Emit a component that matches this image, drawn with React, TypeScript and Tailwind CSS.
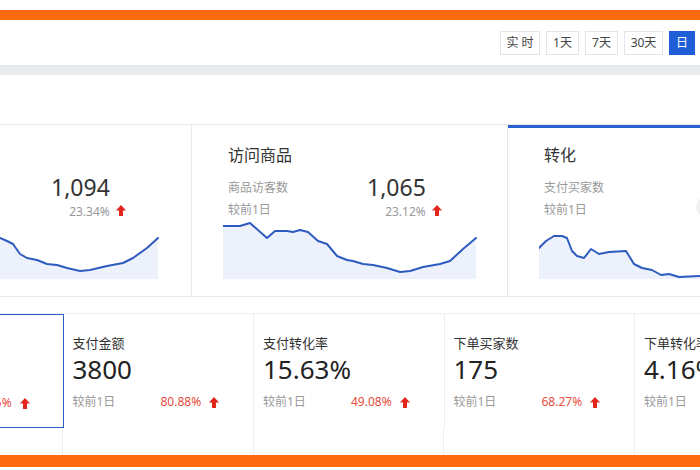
import React from 'react'

type Pt = [number, number]

const font = { fontFamily: '"Noto Sans", "Noto Sans CJK SC", sans-serif' }

function UpArrow() {
  return (
    <svg width="10" height="11" viewBox="0 0 10 11" className="shrink-0">
      <path d="M5 0 L10 5.5 L7 5.5 L7 11 L3 11 L3 5.5 L0 5.5 Z" fill="#e3261c" />
    </svg>
  )
}

function Spark({ points, width, bottom }: { points: Pt[]; width: number; bottom: number }) {
  const line = points.map((p, i) => `${i ? 'L' : 'M'}${p[0]} ${p[1]}`).join(' ')
  const last = points[points.length - 1]
  const area = `${line} L${last[0]} ${bottom} L${points[0][0]} ${bottom} Z`
  return (
    <svg width={width} height={62} viewBox={`0 0 ${width} 62`} className="block">
      <path d={area} fill="#edf1fb" />
      <path d={line} fill="none" stroke="#2d5bbf" strokeWidth="2" strokeLinejoin="round" strokeLinecap="round" />
    </svg>
  )
}

const chart1: Pt[] = [
  [0, 10], [30, 12], [60, 16], [93, 19], [100, 22], [106, 25], [113, 35], [120, 39], [130, 41],
  [140, 45], [150, 46], [160, 49], [173, 52], [183, 51], [200, 47], [216, 44], [226, 39],
  [240, 29], [251, 19],
]
const chart2: Pt[] = [
  [0, 7], [17, 7], [27, 4], [44, 19], [52, 12], [64, 12], [70, 13], [77, 11], [85, 13],
  [95, 22], [104, 25], [114, 37], [124, 41], [130, 42], [140, 45], [150, 46], [164, 49],
  [177, 53], [187, 52], [200, 48], [217, 45], [227, 42], [240, 30], [253, 19],
]
const chart3: Pt[] = [
  [0, 29], [7, 22], [15, 17], [23, 17], [28, 19], [33, 32], [38, 37], [45, 39], [52, 30],
  [60, 35], [70, 33], [87, 32], [95, 45], [103, 49], [113, 51], [122, 56], [130, 55],
  [140, 58], [162, 57],
]

function TrendCard({
  title,
  label,
  value,
  pct,
  points,
  active,
  className,
}: {
  title: string
  label: string
  value: string
  pct: string
  points: Pt[]
  active?: boolean
  className?: string
}) {
  return (
    <div
      className={`w-[316px] shrink-0 h-full border-r border-[#e6e8eb] pl-[31px] ${
        active ? 'border-t-[3px] border-t-[#2a5fd0] pt-[15px]' : 'pt-[18px]'
      } ${className ?? ''}`}
    >
      <div className="pl-[5px]">
        <div className="text-[16px] leading-[24px] text-[#333]">{title}</div>
        <div className="flex mt-[8px] h-[46px]">
          <div className="w-[139px] text-[12px] text-[#999]">
            <div className="leading-[20px] mt-[3px]">{label}</div>
            <div className="leading-[20px] mt-[2px]">较前1日</div>
          </div>
          {value && (
            <div className="grid grid-cols-[auto_auto] items-center">
              <div className="text-[23px] leading-[24px] text-[#333]">{value}</div>
              <div />
              <div className="text-[12px] leading-[20px] mt-[3px] text-[#999] text-right">{pct}</div>
              <div className="pl-[6px]">
                <UpArrow />
              </div>
            </div>
          )}
        </div>
      </div>
      <div className="mt-[-2px]">
        <Spark points={points} width={points[points.length - 1][0] + 2} bottom={60} />
      </div>
    </div>
  )
}

function MetricCell({
  title,
  value,
  pct,
  selected,
  className,
}: {
  title: string
  value: string
  pct: string
  selected?: boolean
  className?: string
}) {
  return (
    <div
      className={`w-[190.5px] shrink-0 h-full pl-[9px] pt-[20px] ${
        selected ? 'border-[1.5px] border-[#2c5cc5]' : 'border-r border-[#eceef0]'
      } ${className ?? ''}`}
    >
      <div className="text-[13px] leading-[18px] text-[#333]">{title}</div>
      <div className="text-[26px] leading-[35px] text-[#222]">{value}</div>
      <div className="flex items-center mt-[6px] text-[12px] leading-[18px]">
        <div className="w-[88px] text-[#999]">较前1日</div>
        <div className="text-[#e84c3d]">{pct}</div>
        <div className="pl-[8px]">
          <UpArrow />
        </div>
      </div>
    </div>
  )
}

export default function App() {
  const ranges = [
    { label: '实时', w: 'w-[40px] tracking-[3px] pl-[3px]' },
    { label: '1天', w: 'w-[33px]' },
    { label: '7天', w: 'w-[33px]' },
    { label: '30天', w: 'w-[39px]' },
  ]

  return (
    <div className="w-[700px] h-[470px] overflow-hidden bg-white flex flex-col" style={font}>
      <div className="h-[10px] shrink-0" />
      <div className="h-[10px] shrink-0 bg-[#fc690f]" />

      {/* header with range switch */}
      <div className="h-[45px] shrink-0 flex items-center justify-end gap-[6px] pr-[5px]">
        {ranges.map((r) => (
          <button
            key={r.label}
            className={`${r.w} h-[24px] border border-[#e3e5e8] bg-white text-[12px] text-[#444] flex items-center justify-center`}
          >
            {r.label}
          </button>
        ))}
        <button className="w-[26px] h-[24px] bg-[#1f5ed6] text-white text-[12px] flex items-center justify-center">
          日
        </button>
      </div>
      <div className="h-[10px] shrink-0 bg-[#e9ecef] border-t border-[#dfe2e6]" />

      <div className="h-[49px] shrink-0" />

      {/* trend cards */}
      <div className="h-[173px] shrink-0 flex border-t border-b border-[#e6e8eb]">
        <TrendCard
          className="ml-[-124px]"
          title="访客"
          label="访客数"
          value="1,094"
          pct="23.34%"
          points={chart1}
        />
        <TrendCard title="访问商品" label="商品访客数" value="1,065" pct="23.12%" points={chart2} />
        <div className="relative">
          <TrendCard active title="转化" label="支付买家数" value="" pct="" points={chart3} />
          <div className="absolute left-[188px] top-[72px] w-[20px] h-[20px] rounded-full bg-[#eef0f2]" />
        </div>
      </div>

      <div className="h-[16px] shrink-0" />

      {/* metric cells */}
      <div className="h-[115px] shrink-0 flex border-t border-[#eceef0]">
        <MetricCell className="ml-[-127px]" selected title="支付买家数" value="243" pct="23.35%" />
        <MetricCell title="支付金额" value="3800" pct="80.88%" />
        <MetricCell title="支付转化率" value="15.63%" pct="49.08%" />
        <MetricCell title="下单买家数" value="175" pct="68.27%" />
        <MetricCell title="下单转化率" value="4.16%" pct="12.50%" />
      </div>
      <div className="h-[27px] shrink-0 flex">
        <div className="w-[63px] shrink-0 border-r border-[#eceef0]" />
        <div className="w-[190.5px] shrink-0 border-r border-[#eceef0]" />
        <div className="w-[190.5px] shrink-0 border-r border-[#eceef0]" />
        <div className="w-[190.5px] shrink-0 border-r border-[#eceef0]" />
        <div className="flex-1" />
      </div>

      <div className="h-[12px] shrink-0 bg-[#fc690f]" />
      <div className="flex-1" />
    </div>
  )
}
